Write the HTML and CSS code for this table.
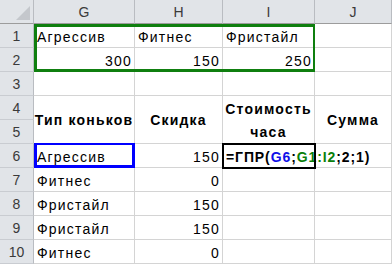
FILE: index.html
```html
<!DOCTYPE html>
<html lang="ru">
<head>
<meta charset="utf-8">
<title>ГПР</title>
<link rel="stylesheet" href="styles.css">
</head>
<body>
<div class="sheet">
  <div class="corner"><span class="select-all"></span></div>
  <div class="colhead">G</div>
  <div class="colhead">H</div>
  <div class="colhead">I</div>
  <div class="colhead">J</div>

  <div class="rowhead">1</div>
  <div class="cell">Агрессив</div>
  <div class="cell">Фитнес</div>
  <div class="cell">Фристайл</div>
  <div class="cell"></div>

  <div class="rowhead">2</div>
  <div class="cell num">300</div>
  <div class="cell num">150</div>
  <div class="cell num">250</div>
  <div class="cell"></div>

  <div class="rowhead">3</div>
  <div class="cell"></div>
  <div class="cell"></div>
  <div class="cell"></div>
  <div class="cell"></div>

  <div class="rowhead">4</div>
  <div class="cell title">Тип коньков</div>
  <div class="cell title">Скидка</div>
  <div class="cell title wrap">Стоимость часа</div>
  <div class="cell title">Сумма</div>
  <div class="rowhead">5</div>

  <div class="rowhead">6</div>
  <div class="cell">Агрессив</div>
  <div class="cell num">150</div>
  <div class="cell formula">=ГПР(<span class="ref-a">G6</span>;<span class="ref-b">G1:I2</span>;2;1)</div>
  <div class="cell"></div>

  <div class="rowhead">7</div>
  <div class="cell">Фитнес</div>
  <div class="cell num">0</div>
  <div class="cell"></div>
  <div class="cell"></div>

  <div class="rowhead">8</div>
  <div class="cell">Фристайл</div>
  <div class="cell num">150</div>
  <div class="cell"></div>
  <div class="cell"></div>

  <div class="rowhead">9</div>
  <div class="cell">Фристайл</div>
  <div class="cell num">150</div>
  <div class="cell"></div>
  <div class="cell"></div>

  <div class="rowhead">10</div>
  <div class="cell">Фитнес</div>
  <div class="cell num">0</div>
  <div class="cell"></div>
  <div class="cell"></div>

  <!-- range highlights drawn over the grid while the formula is edited -->
  <div class="range range-table"></div>
  <div class="range range-key"></div>
  <div class="range range-active"></div>
</div>
</body>
</html>
```

FILE: styles.css
```css
* {
  box-sizing: border-box;
}

html, body {
  margin: 0;
  height: 265px;
  overflow: hidden;
  background: #ffffff;
}

.sheet {
  position: relative;
  display: grid;
  grid-template-columns: 34px 101px 88px 92px 77px;
  grid-auto-rows: 24px;
  width: 392px;
  font-family: "Liberation Sans", Arial, sans-serif;
  font-size: 14px;
  letter-spacing: 1.2px;
  color: #000000;
}

/* column and row headers */
.corner,
.colhead,
.rowhead {
  background: #e1e4e8;
  color: #3a3a3a;
  font-size: 14px;
  letter-spacing: 0;
  display: flex;
  align-items: center;
  justify-content: center;
}

.corner {
  position: relative;
  border-right: 1px solid #b9bcc1;
  border-bottom: 1px solid #9c9c9c;
}

.select-all {
  position: absolute;
  right: 3px;
  bottom: 3px;
  width: 0;
  height: 0;
  border-left: 14px solid transparent;
  border-bottom: 14px solid #c4c7cc;
}

.colhead {
  border-right: 1px solid #b9bcc1;
  border-bottom: 1px solid #9c9c9c;
  padding-top: 1px;
}

.rowhead {
  border-right: 1px solid #b9bcc1;
  border-bottom: 1px solid #c9ccd1;
  padding-top: 1px;
}

/* worksheet cells */
.cell {
  display: flex;
  align-items: flex-end;
  padding: 0 3px 2px 3px;
  border-right: 1px solid #d4d4d4;
  border-bottom: 1px solid #d4d4d4;
  white-space: nowrap;
  line-height: 16px;
}

.num {
  justify-content: flex-end;
  padding-right: 2px;
}

.title {
  grid-row: span 2;
  align-items: center;
  justify-content: center;
  text-align: center;
  font-weight: bold;
  letter-spacing: 1.2px;
  padding: 0;
}

.wrap {
  white-space: normal;
  line-height: 23px;
  padding-top: 2px;
}

.formula {
  position: relative;
  z-index: 1;
  overflow: visible;
  font-weight: bold;
  letter-spacing: 0.9px;
}

.ref-a {
  color: #1010e8;
}

.ref-b {
  color: #0a800a;
}

/* colored range frames */
.range {
  position: absolute;
  z-index: 2;
  pointer-events: none;
}

.range-table {
  left: 34px;
  top: 24px;
  width: 281px;
  height: 48px;
  border: 2px solid #0f7f0f;
  border-top-width: 3px;
  border-bottom-width: 3px;
  border-left-width: 3px;
}

.range-key {
  left: 34px;
  top: 143px;
  width: 101px;
  height: 25px;
  border: 3px solid #0000ff;
  border-top-width: 2px;
}

.range-active {
  left: 222px;
  top: 143px;
  width: 94px;
  height: 26px;
  border: 2px solid #000000;
}
```
